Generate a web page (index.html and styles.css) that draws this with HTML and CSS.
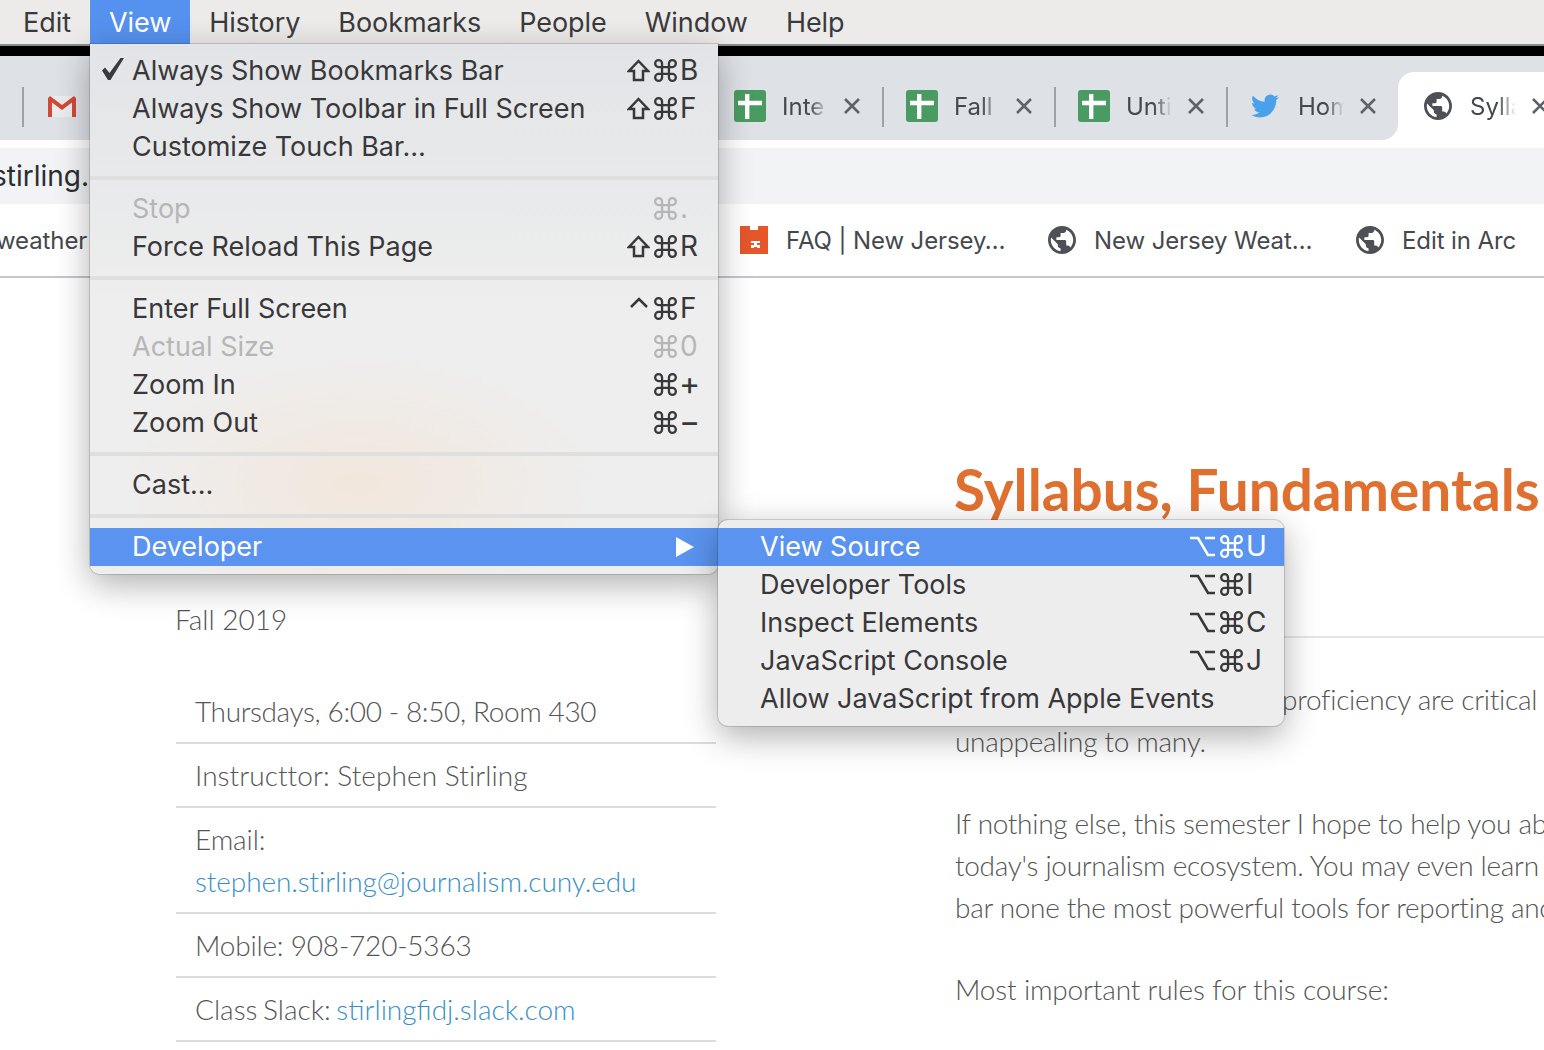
FILE: index.html
```html
<!DOCTYPE html>
<html lang="en">

<head>
    <meta charset="UTF-8">
    <title>Syllabus, Fundamentals</title>
    <link rel="stylesheet" href="styles.css">
</head>

<body>
    <svg class="defs" width="0" height="0">
        <symbol id="globe" viewBox="2 2 20 20">
            <path d="M12 2C6.48 2 2 6.48 2 12s4.48 10 10 10 10-4.48 10-10S17.52 2 12 2zm-1 17.93c-3.95-.49-7-3.85-7-7.93 0-.62.08-1.21.21-1.79L9 15v1c0 1.1.9 2 2 2v1.93zm6.9-2.54c-.26-.81-1-1.39-1.9-1.39h-1v-3c0-.55-.45-1-1-1H8v-2h2c.55 0 1-.45 1-1V7h2c1.1 0 2-.9 2-2v-.41c2.93 1.19 5 4.06 5 7.41 0 2.08-.8 3.97-2.1 5.39z" fill="#4d5156" />
        </symbol>
        <symbol id="sheet" viewBox="0 0 32 32">
            <rect width="32" height="32" rx="3" fill="#4a9b62" />
            <path d="M4 10.7h7V4h4.400v6.700H28v4.600H15.400V29H11V15.300H4z" fill="#fff" />
        </symbol>
        <symbol id="close" viewBox="0 0 18 18">
            <path d="M2 2l14 14M16 2L2 16" stroke="#5f6368" stroke-width="2.6" fill="none" />
        </symbol>
        <symbol id="cmd" viewBox="2 2 20 20">
            <path d="M15 6v12a3 3 0 1 0 3-3H6a3 3 0 1 0 3 3V6a3 3 0 1 0-3 3h12a3 3 0 1 0-3-3" stroke="currentColor" stroke-width="2" fill="none" />
        </symbol>
        <symbol id="shift" viewBox="0 0 23 23">
            <path d="M11.500 2L21 12h-5v9H7v-9H2z" stroke="currentColor" stroke-width="2.500" fill="none" />
        </symbol>
        <symbol id="option" viewBox="0 0 25 23">
            <path d="M0 3h8l10 17h7M15 3h10" stroke="currentColor" stroke-width="2.600" fill="none" />
        </symbol>
        <symbol id="ctrl" viewBox="0 0 23 23">
            <path d="M4 10l8-8 8 8" stroke="currentColor" stroke-width="2.500" fill="none" />
        </symbol>
    </svg>

    <nav class="menubar">
        <span class="menubar-item">Edit</span>
        <span class="menubar-item is-open">View</span>
        <span class="menubar-item">History</span>
        <span class="menubar-item">Bookmarks</span>
        <span class="menubar-item">People</span>
        <span class="menubar-item">Window</span>
        <span class="menubar-item">Help</span>
    </nav>
    <div class="topline"></div>

    <div class="tabbar">
        <div class="tabs">
            <div class="tab">
                <svg class="tab-icon" viewBox="0 0 28 21">
                    <path d="M0 0h28v21H0z" fill="#ececec" />
                    <path d="M0 2v19h4V6.500l10 7.500 10-7.500V21h4V2l-2-2-12 9L2 0z" fill="#cf4a3b" />
                </svg>
            </div>
            <div class="tab"><svg class="tab-icon"><use href="#sheet" /></svg></div>
            <div class="tab"><svg class="tab-icon"><use href="#sheet" /></svg></div>
            <div class="tab"><svg class="tab-icon"><use href="#sheet" /></svg></div>
            <div class="tab">
                <svg class="tab-icon"><use href="#sheet" /></svg>
                <span class="tab-title">Inte</span>
                <svg class="tab-close"><use href="#close" /></svg>
            </div>
            <div class="tab">
                <svg class="tab-icon"><use href="#sheet" /></svg>
                <span class="tab-title">Fall</span>
                <svg class="tab-close"><use href="#close" /></svg>
            </div>
            <div class="tab">
                <svg class="tab-icon"><use href="#sheet" /></svg>
                <span class="tab-title">Unti</span>
                <svg class="tab-close"><use href="#close" /></svg>
            </div>
            <div class="tab">
                <svg class="tab-icon tab-bird" viewBox="0 0 24 24">
                    <path d="M23.953 4.57a10 10 0 01-2.825.775 4.958 4.958 0 002.163-2.723c-.951.555-2.005.959-3.127 1.184a4.92 4.92 0 00-8.384 4.482C7.69 8.095 4.067 6.13 1.64 3.162a4.822 4.822 0 00-.666 2.475c0 1.71.87 3.213 2.188 4.096a4.904 4.904 0 01-2.228-.616v.06a4.923 4.923 0 003.946 4.827 4.996 4.996 0 01-2.212.085 4.936 4.936 0 004.604 3.417 9.867 9.867 0 01-6.102 2.105c-.39 0-.779-.023-1.17-.067a13.995 13.995 0 007.557 2.209c9.053 0 13.998-7.496 13.998-13.985 0-.21 0-.42-.015-.63A9.935 9.935 0 0024 4.59z" fill="#4aa1eb" />
                </svg>
                <span class="tab-title">Hom</span>
                <svg class="tab-close"><use href="#close" /></svg>
            </div>
        </div>
        <div class="tab-active">
            <svg class="globe"><use href="#globe" /></svg>
            <span class="tab-title">Sylla</span>
            <svg class="tab-close"><use href="#close" /></svg>
        </div>
    </div>

    <div class="omnibox"><span class="omnibox-text">stirling.</span></div>

    <div class="bookmarks">
        <span class="bookmark-cut">weather</span>
        <div class="bookmark">
            <svg class="globe" viewBox="0 0 28 28">
                <path d="M0 0h10v4h8V0h10v28H0z" fill="#e5562a" />
                <path d="M11 15h9v2h-3v2h3v3h-3v-1h-3v1h-3v-3h3v-2h-3z" fill="#fff" />
            </svg>
            <span>FAQ | New Jersey…</span>
        </div>
        <div class="bookmark"><svg class="globe"><use href="#globe" /></svg><span>New Jersey Weat…</span></div>
        <div class="bookmark"><svg class="globe"><use href="#globe" /></svg><span>Edit in Arc</span></div>
    </div>

    <main class="page">
        <section class="side">
            <p class="term">Fall 2019</p>
            <ul class="facts">
                <li class="fact-time">Thursdays, 6:00 - 8:50, Room 430</li>
                <li class="fact-name">Instructtor: Stephen Stirling</li>
                <li class="fact-mail">Email:<br><a href="#">stephen.stirling@journalism.cuny.edu</a></li>
                <li class="fact-phone">Mobile: 908-720-5363</li>
                <li class="fact-slack">Class Slack: <a href="#">stirlingfidj.slack.com</a></li>
            </ul>
        </section>
        <section class="content">
            <h1>Syllabus, Fundamentals</h1>
            <hr>
            <p><span class="covered"></span>proficiency are critical<br>unappealing to many.</p>
            <p>If nothing else, this semester I hope to help you abs<br>today's journalism ecosystem. You may even learn<br>bar none the most powerful tools for reporting anc</p>
            <p class="rules">Most important rules for this course:</p>
        </section>
    </main>

    <div class="menu view-menu">
        <div class="item">
            <svg class="check" viewBox="0 0 22 22"><path d="M0 12.500l3-3 4.500 5.500L18.500 0H22L8.500 22H6z" fill="#3a3a3c" /></svg>
            <span>Always Show Bookmarks Bar</span>
            <span class="keys"><i><svg><use href="#shift" /></svg><svg><use href="#cmd" /></svg></i><b>B</b></span>
        </div>
        <div class="item"><span>Always Show Toolbar in Full Screen</span><span class="keys"><i><svg><use href="#shift" /></svg><svg><use href="#cmd" /></svg></i><b>F</b></span></div>
        <div class="item"><span>Customize Touch Bar…</span></div>
        <div class="sep"></div>
        <div class="item is-off"><span>Stop</span><span class="keys"><i><svg><use href="#cmd" /></svg></i><b>.</b></span></div>
        <div class="item"><span>Force Reload This Page</span><span class="keys"><i><svg><use href="#shift" /></svg><svg><use href="#cmd" /></svg></i><b>R</b></span></div>
        <div class="sep"></div>
        <div class="item"><span>Enter Full Screen</span><span class="keys"><i><svg><use href="#ctrl" /></svg><svg><use href="#cmd" /></svg></i><b>F</b></span></div>
        <div class="item is-off"><span>Actual Size</span><span class="keys"><i><svg><use href="#cmd" /></svg></i><b>0</b></span></div>
        <div class="item"><span>Zoom In</span><span class="keys"><i><svg><use href="#cmd" /></svg></i><b class="key-math">+</b></span></div>
        <div class="item"><span>Zoom Out</span><span class="keys"><i><svg><use href="#cmd" /></svg></i><b class="key-math">−</b></span></div>
        <div class="sep"></div>
        <div class="item"><span>Cast…</span></div>
        <div class="sep"></div>
        <div class="item is-active"><span>Developer</span><span class="arrow"></span></div>
    </div>

    <div class="menu dev-menu">
        <div class="item is-active"><span>View Source</span><span class="keys"><i><svg class="key-option"><use href="#option" /></svg><svg><use href="#cmd" /></svg></i><b>U</b></span></div>
        <div class="item"><span>Developer Tools</span><span class="keys"><i><svg class="key-option"><use href="#option" /></svg><svg><use href="#cmd" /></svg></i><b>I</b></span></div>
        <div class="item"><span>Inspect Elements</span><span class="keys"><i><svg class="key-option"><use href="#option" /></svg><svg><use href="#cmd" /></svg></i><b>C</b></span></div>
        <div class="item"><span>JavaScript Console</span><span class="keys"><i><svg class="key-option"><use href="#option" /></svg><svg><use href="#cmd" /></svg></i><b>J</b></span></div>
        <div class="item"><span>Allow JavaScript from Apple Events</span></div>
    </div>
</body>

</html>
```

FILE: styles.css
```css
* {
    box-sizing: border-box;
}

body {
    margin: 0;
    height: 1050px;
    overflow: hidden;
    position: relative;
    background-color: #fff;
    font-family: Inter, "DejaVu Sans", sans-serif;
    color: #3a3a3c;
}

.defs {
    position: absolute;
}

/* mac menu bar */
.menubar {
    display: flex;
    height: 44px;
    padding-left: 4px;
    background-color: #ecebe9;
    font-size: 27px;
    letter-spacing: -.05px;
    line-height: 46px;
}

.menubar-item {
    padding: 0 19px;
}

.menubar-item.is-open {
    background-color: #5591ef;
    color: #fff;
}

.topline {
    height: 12px;
    background-color: #000;
    border-top: 2px solid #8c8c8c;
}

/* tabs */
.tabbar {
    display: flex;
    height: 92px;
    background: linear-gradient(#dee1e6 30px, #fff 30px);
}

.tabs {
    display: flex;
    flex: none;
    width: 1398px;
    height: 84px;
    padding-left: 22px;
    background-color: #dee1e6;
    border-bottom-right-radius: 16px;
}

.tab {
    display: flex;
    flex: none;
    align-items: center;
    width: 172px;
    height: 40px;
    margin-top: 31px;
    padding: 0 0 2px 22px;
    border-left: 2px solid #9ea2a7;
}

.tab-icon {
    flex: none;
    width: 32px;
    height: 32px;
}

.tab-bird {
    width: 28px;
    margin-left: 1px;
    margin-right: 3px;
}

.tab:first-child .tab-icon {
    width: 28px;
    height: 21px;
    margin-left: 2px;
}

.tab-title {
    flex: none;
    width: 46px;
    margin-left: 16px;
    overflow: hidden;
    font-size: 24px;
    color: #45484d;
    -webkit-mask-image: linear-gradient(90deg, #000 60%, transparent);
    mask-image: linear-gradient(90deg, #000 60%, transparent);
}

.tab-close {
    flex: none;
    width: 18px;
    height: 18px;
    margin-left: 15px;
}

.tab-active {
    display: flex;
    flex: 1;
    align-items: center;
    margin-top: 16px;
    padding: 0 0 8px 26px;
    overflow: hidden;
    background-color: #fff;
    border-top-left-radius: 16px;
}

.tab-active .tab-title {
    margin-left: 18px;
}

.globe {
    flex: none;
    width: 28px;
    height: 28px;
}

/* address bar, cut off by the menu */
.omnibox {
    height: 56px;
    overflow: hidden;
    background-color: #f1f3f4;
}

.omnibox-text {
    display: block;
    margin-left: -8px;
    font-size: 28px;
    line-height: 56px;
    color: #2c2d30;
}

.bookmarks {
    display: flex;
    align-items: center;
    height: 74px;
    overflow: hidden;
    border-bottom: 2px solid #c4c6c9;
    font-size: 24px;
    letter-spacing: -.1px;
    color: #45484d;
}

.bookmark-cut {
    flex: none;
    width: 744px;
    margin-left: -4px;
}

.bookmark {
    display: flex;
    flex: none;
    align-items: center;
    gap: 18px;
    width: 308px;
}

/* page behind the menus */
.page {
    display: grid;
    grid-template-columns: 540px 1fr;
    column-gap: 239px;
    padding-left: 176px;
    font-family: Lato, sans-serif;
    font-weight: 300;
    font-size: 28px;
    line-height: 42px;
    color: #555;
}

.page a {
    color: #3a8fc7;
    text-decoration: none;
}

.term {
    margin: 320px 0 40px -1px;
}

.facts {
    margin: 0;
    padding: 0;
    list-style: none;
}

.facts li {
    padding: 10px 19px;
    border-bottom: 2px solid #dcdcdc;
}

.facts .fact-time {
    letter-spacing: -.37px;
}

.facts .fact-name {
    letter-spacing: .07px;
}

.facts .fact-mail {
    letter-spacing: -.09px;
}

.facts .fact-phone {
    letter-spacing: -.2px;
}

.facts .fact-slack {
    word-spacing: -2px;
}

.content {
    overflow: hidden;
    white-space: nowrap;
}

.content h1 {
    margin: 179px 0 0 -1px;
    font-size: 56.7px;
    line-height: 64px;
    font-weight: 700;
    color: #e0702f;
}

.content hr {
    height: 2px;
    margin: 115px 0 40px;
    border: 0;
    background-color: #e6e6e6;
}

.content p {
    margin: 0 0 40px;
    letter-spacing: -.3px;
}

.content .rules {
    letter-spacing: -.16px;
}

.covered {
    display: inline-block;
    width: 327px;
}

/* mac dropdown menus */
.menu {
    position: absolute;
    background:
        radial-gradient(ellipse 240px 130px at 270px 440px, rgba(245, 226, 208, .6), transparent),
        linear-gradient(#e2e4e7, #eeeeee 260px);
    box-shadow: 0 10px 34px rgba(0, 0, 0, .32), 0 0 0 1px rgba(0, 0, 0, .14);
    font-size: 27px;
    line-height: 38px;
    color: #38383a;
}

.view-menu {
    top: 44px;
    left: 90px;
    width: 628px;
    height: 530px;
    padding-top: 8px;
    border-radius: 0 0 10px 10px;
}

.dev-menu {
    top: 520px;
    left: 718px;
    width: 566px;
    height: 206px;
    padding-top: 8px;
    background: #ededed;
    border-radius: 10px;
}

.item {
    display: flex;
    position: relative;
    justify-content: space-between;
    height: 38px;
    padding-left: 42px;
    padding-right: 20px;
}

.item.is-off {
    color: #b6b6b6;
}

.item.is-active {
    background-color: #5a94f0;
    color: #fff;
}

.sep {
    height: 4px;
    margin: 10px 0;
    background-color: #dfdfdf;
}

.check {
    position: absolute;
    left: 12px;
    top: 6px;
    width: 22px;
    height: 22px;
}

.keys {
    display: flex;
    flex: none;
    width: 72px;
    height: 36px;
}

.keys i {
    display: flex;
    flex: none;
    justify-content: flex-end;
    align-items: center;
    gap: 4px;
    width: 51px;
}

.keys svg {
    flex: none;
    width: 23px;
    height: 23px;
}

.keys .key-option {
    width: 25px;
    margin-right: 1px;
}

.keys b {
    margin-left: 3px;
    font-weight: 400;
    font-size: 28px;
    line-height: 36px;
}

.keys .key-math {
    margin-left: 2px;
    font-size: 32px;
}

.dev-menu .keys {
    width: 76px;
}

.dev-menu .keys i {
    width: 55px;
}

.arrow {
    width: 0;
    height: 0;
    margin: 9px 4px 0 0;
    border-left: 18px solid #fff;
    border-top: 10px solid transparent;
    border-bottom: 10px solid transparent;
}
```
